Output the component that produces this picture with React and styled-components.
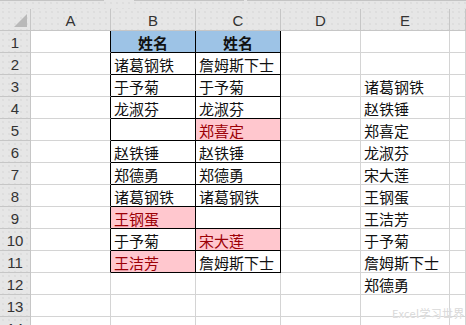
import React from "react";
import styled, { createGlobalStyle } from "styled-components";

const GlobalStyle = createGlobalStyle`
  html, body {
    margin: 0;
    padding: 0;
    background: #fff;
    overflow: hidden;
  }
`;

const Page = styled.div`
  position: relative;
  width: 466px;
  height: 325px;
  overflow: hidden;
  background: #fff;
`;

const TopStrip = styled.div`
  height: 9px;
  background-color: #e6e6e6;
  background-image: radial-gradient(#d2d2d2 0.6px, transparent 0.8px);
  background-size: 6px 6px;
  display: flex;
  gap: 3px;
`;

const FormulaEdge = styled.div`
  height: 1px;
  width: ${(p) => p.$w};
  background: #c4c4c4;
`;

const Sheet = styled.div`
  display: grid;
  grid-template-columns: 31px 80px 85px 85px 80px 89px 1fr;
  grid-auto-rows: 22px;
  font-family: "Noto Sans CJK SC", "Noto Sans", sans-serif;
`;

const HeadCell = styled.div`
  box-sizing: border-box;
  display: flex;
  align-items: center;
  justify-content: center;
  background-color: #e6e6e6;
  background-image: radial-gradient(#d2d2d2 0.6px, transparent 0.8px);
  background-size: 6px 6px;
  border-right: 1px solid #c6c6c6;
  border-bottom: 1px solid #c6c6c6;
  color: #333;
  font-family: "Liberation Sans", "Noto Sans", sans-serif;
  font-size: 15px;
  padding-top: 1px;
`;

const Corner = styled(HeadCell)`
  align-items: flex-end;
  justify-content: flex-end;
  padding: 0 3px 3px 0;
`;

const Cell = styled.div`
  box-sizing: border-box;
  display: flex;
  align-items: center;
  justify-content: ${(p) => (p.$head ? "center" : "flex-start")};
  padding: 1px 3px 0;
  font-size: 15px;
  font-weight: ${(p) => (p.$head ? 700 : 400)};
  white-space: nowrap;
  overflow: visible;
  color: ${(p) => (p.$bad ? "#9c0006" : "#111")};
  background: ${(p) => (p.$head ? "#9dc3e6" : p.$bad ? "#ffc7ce" : "#fff")};
  border-right: 1px solid ${(p) => (p.$edge ? "#000" : "#d4d4d4")};
  border-bottom: 1px solid ${(p) => (p.$edge ? "#000" : "#d4d4d4")};
`;

const LeftEdgeCell = styled(Cell)`
  border-right-color: ${(p) => (p.$line ? "#000" : "#d4d4d4")};
  border-bottom-color: #d4d4d4;
`;

const Watermark = styled.div`
  position: absolute;
  left: 392px;
  top: 305px;
  font-family: "Noto Sans CJK SC", "Noto Sans", sans-serif;
  font-size: 11px;
  color: #d9d9d9;
  text-shadow: 0 0 1px #fff;
  letter-spacing: 0.3px;
`;

const rows = [
  { b: "姓名", c: "姓名", head: true },
  { b: "诸葛钢铁", c: "詹姆斯下士" },
  { b: "于予菊", c: "于予菊", e: "诸葛钢铁" },
  { b: "龙淑芬", c: "龙淑芬", e: "赵铁锤" },
  { b: "", c: "郑喜定", cBad: true, e: "郑喜定" },
  { b: "赵铁锤", c: "赵铁锤", e: "龙淑芬" },
  { b: "郑德勇", c: "郑德勇", e: "宋大莲" },
  { b: "诸葛钢铁", c: "诸葛钢铁", e: "王钢蛋" },
  { b: "王钢蛋", bBad: true, c: "", e: "王洁芳" },
  { b: "于予菊", c: "宋大莲", cBad: true, e: "于予菊" },
  { b: "王洁芳", bBad: true, c: "詹姆斯下士", e: "詹姆斯下士" },
  { e: "郑德勇", blank: true },
  { blank: true },
  { blank: true },
];

const letters = ["A", "B", "C", "D", "E", ""];

export default function App() {
  return (
    <Page>
      <GlobalStyle />
      <TopStrip>
        <FormulaEdge $w="104px" />
        <FormulaEdge $w="0px" style={{ marginLeft: 24 }} />
        <FormulaEdge $w="110px" />
        <FormulaEdge $w="219px" />
      </TopStrip>
      <Sheet>
        <Corner>
          <svg width="13" height="13" viewBox="0 0 13 13">
            <polygon points="13,0 13,13 0,13" fill="#b9b9b9" />
          </svg>
        </Corner>
        {letters.map((l, i) => (
          <HeadCell key={i}>{l}</HeadCell>
        ))}
        {rows.map((r, i) => {
          const inTable = !r.blank;
          return (
            <React.Fragment key={i}>
              <HeadCell>{i + 1}</HeadCell>
              <LeftEdgeCell $line={inTable} />
              {inTable ? (
                <>
                  <Cell $edge $head={r.head} $bad={r.bBad}>{r.b}</Cell>
                  <Cell $edge $head={r.head} $bad={r.cBad}>{r.c}</Cell>
                </>
              ) : (
                <>
                  <Cell />
                  <Cell />
                </>
              )}
              <Cell />
              <Cell>{r.e}</Cell>
              <Cell />
            </React.Fragment>
          );
        })}
      </Sheet>
      <Watermark>Excel学习世界</Watermark>
    </Page>
  );
}
